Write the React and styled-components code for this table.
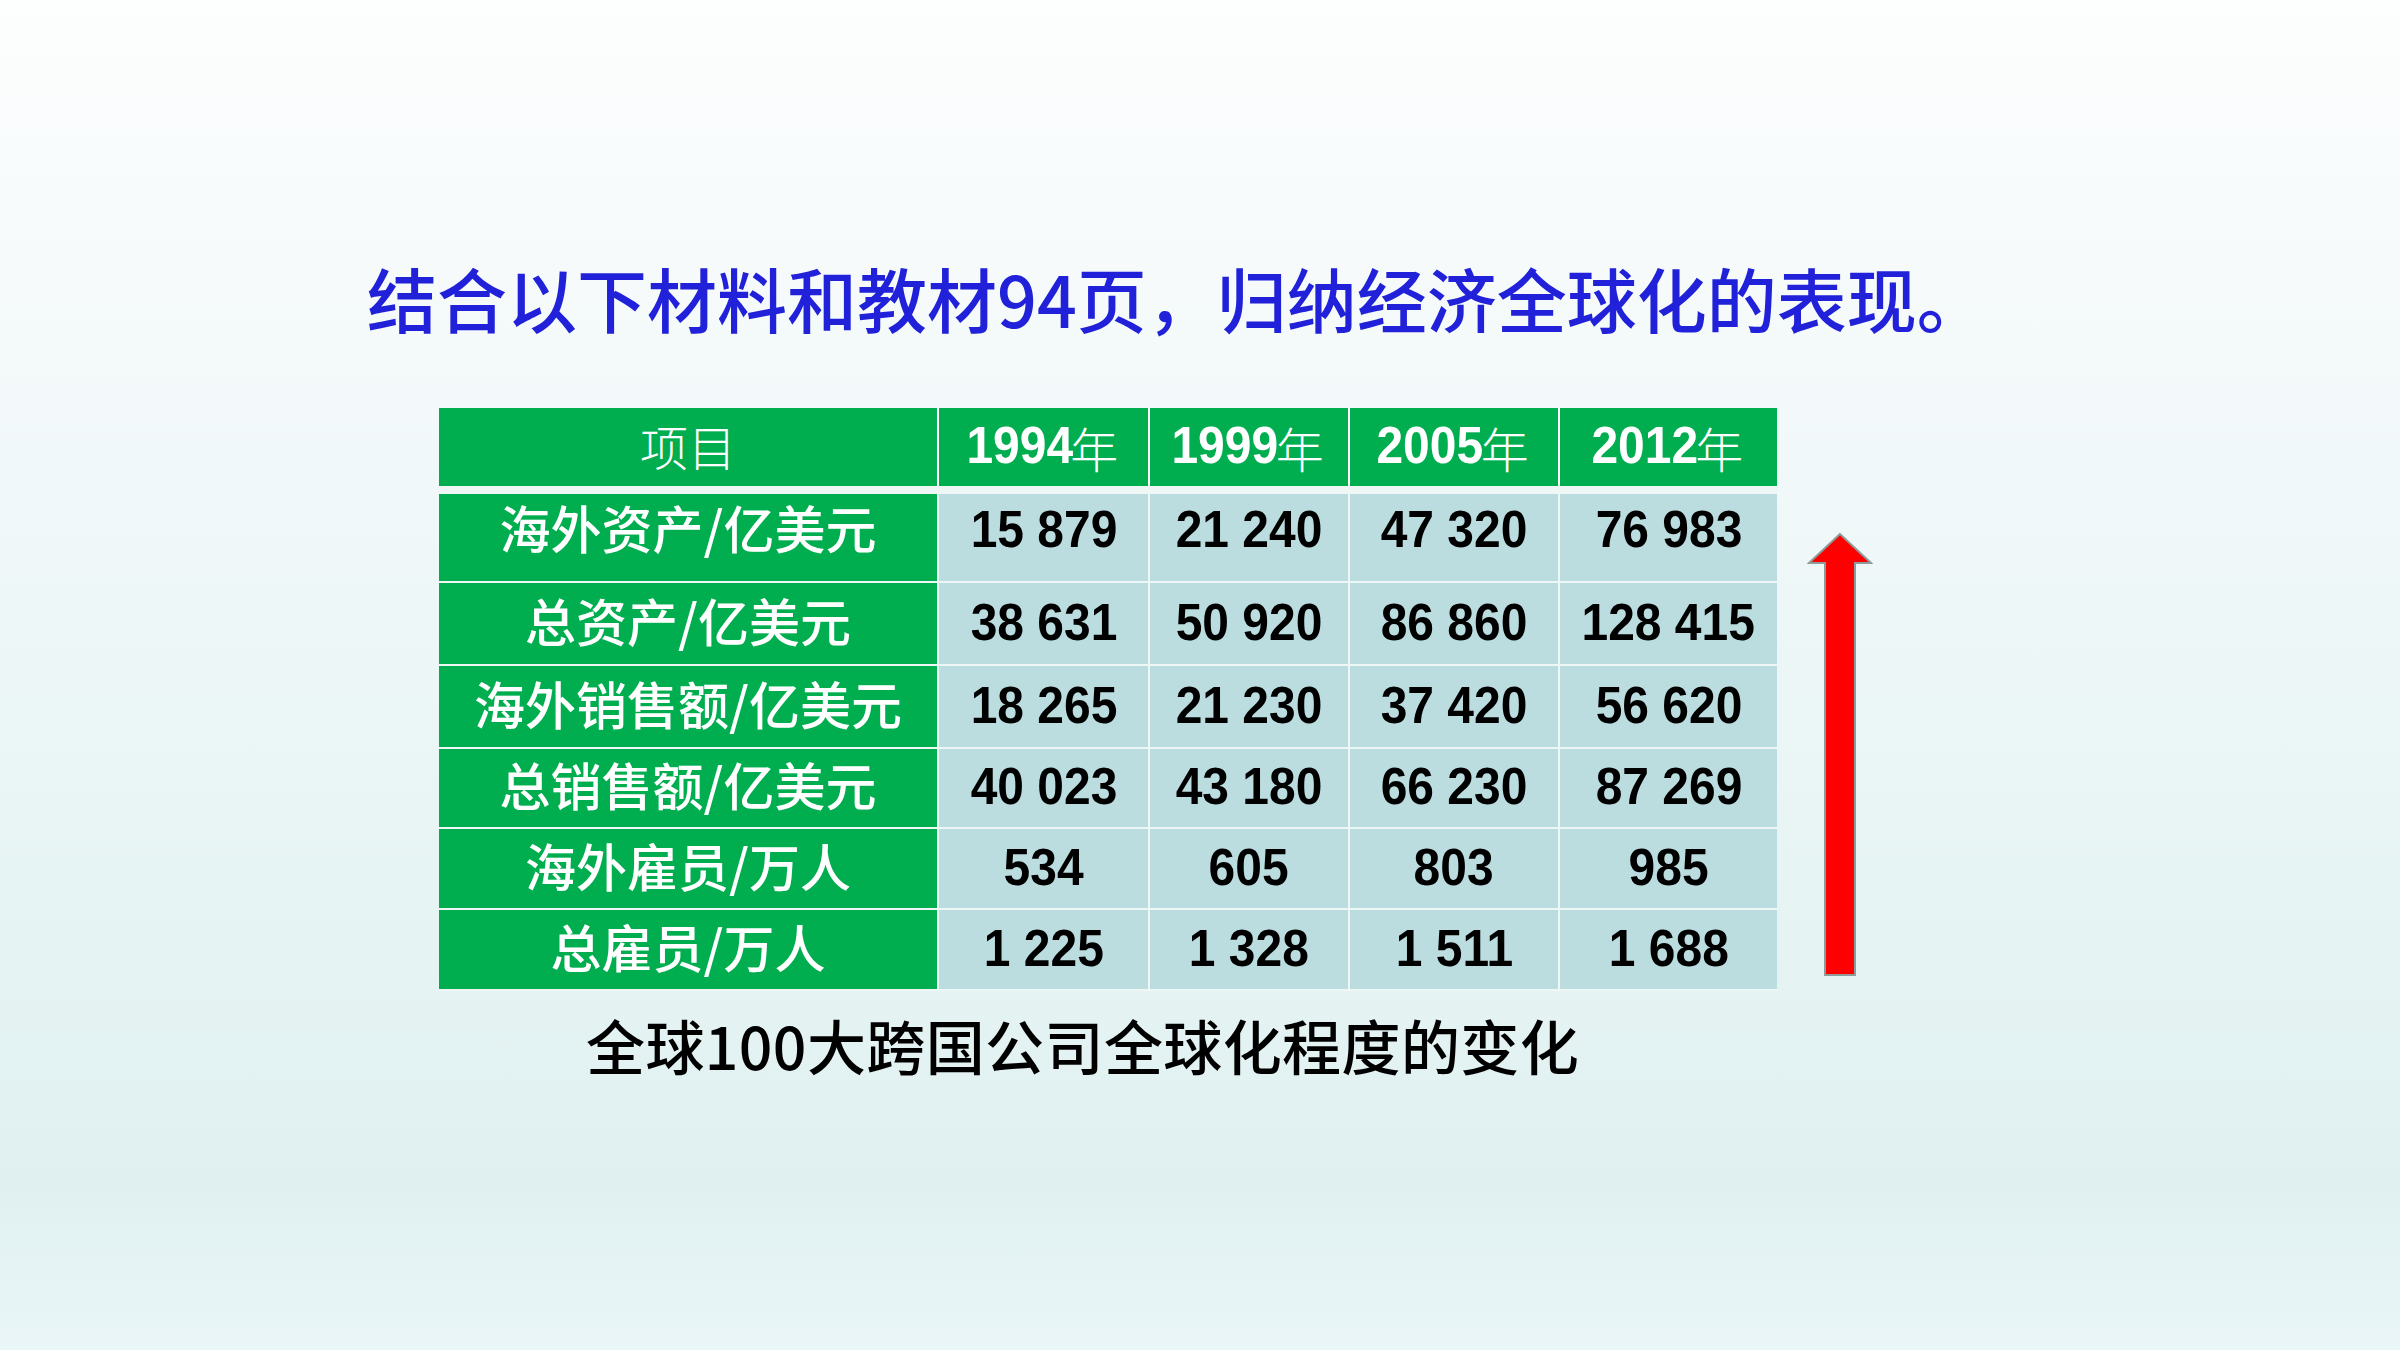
import React from 'react';
import styled, { createGlobalStyle } from 'styled-components';

const GlobalStyle = createGlobalStyle`
	html, body {
		margin: 0;
		padding: 0;
	}
	body {
		font-family: "Liberation Sans", "Noto Sans CJK SC", sans-serif;
	}
`;

const Page = styled.div`
	width: 2400px;
	height: 1350px;
	box-sizing: border-box;
	padding-top: 263px;
	overflow: hidden;
	background: linear-gradient(180deg, #fdfefe 0%, #f6fafb 20%, #e9f5f5 60%, #e0f0f0 88%, #eaf6f7 100%);
`;

const Title = styled.h1`
	margin: 0 0 0 367px;
	font-family: "Noto Sans CJK SC", sans-serif;
	font-size: 70px;
	line-height: 70px;
	font-weight: 500;
	color: #2121d9;
	white-space: nowrap;
`;

const TableRow = styled.div`
	display: flex;
	align-items: flex-start;
	margin: 75px 0 0 439px;
`;

const Table = styled.div`
	display: flex;
	flex-direction: column;
	gap: 2px;
	background: #eef7f6;
	padding-bottom: 2px;
`;

const Row = styled.div`
	display: grid;
	grid-template-columns: 498px 209px 198px 208px 217px;
	column-gap: 2px;
	height: ${p => p.$h}px;
	margin-bottom: ${p => (p.$head ? 6 : 0)}px;
	background: ${p => (p.$head ? '#ffffff' : 'transparent')};
`;

const Cell = styled.div`
	display: flex;
	align-items: center;
	justify-content: center;
	box-sizing: border-box;
	padding-bottom: ${p => p.$lift || 0}px;
	background: ${p => (p.$green ? '#00ae4f' : '#bcdddf')};
	color: ${p => (p.$green ? '#ffffff' : '#000000')};
	white-space: nowrap;
`;

const Label = styled.span`
	display: block;
	padding-bottom: 7px;
	font-family: "Noto Sans CJK SC", sans-serif;
	font-size: 51px;
	font-weight: 500;
	line-height: 1;
`;

const HeadLabel = styled.span`
	display: block;
	padding-bottom: 5px;
	font-family: "Noto Sans CJK SC", sans-serif;
	font-size: 48px;
	font-weight: 300;
	line-height: 1;
`;

// digits in the slide are a touch taller and narrower than plain Arial Bold
const Num = styled.span`
	display: inline-block;
	font-family: "Liberation Sans", sans-serif;
	font-size: 51px;
	font-weight: 700;
	line-height: 1;
	transform: scaleX(0.94);
	margin: 0 -${p => p.$trim || 0}px;
	padding-bottom: 3px;
`;

const Year = styled.span`
	font-family: "Noto Sans CJK SC", sans-serif;
	font-weight: 300;
	font-size: 48px;
`;

const Arrow = styled.svg`
	flex: none;
	margin: 124px 0 0 30px;
`;

const Caption = styled.p`
	margin: 24px 0 0 586px;
	font-family: "Noto Sans CJK SC", sans-serif;
	font-size: 59px;
	line-height: 59px;
	letter-spacing: 0.4px;
	font-weight: 500;
	color: #000;
	white-space: nowrap;
`;

const years = ['1994', '1999', '2005', '2012'];

const rows = [
	{ label: '海外资产/亿美元', values: ['15 879', '21 240', '47 320', '76 983'], h: 87, lift: 14 },
	{ label: '总资产/亿美元', values: ['38 631', '50 920', '86 860', '128 415'], h: 81 },
	{ label: '海外销售额/亿美元', values: ['18 265', '21 230', '37 420', '56 620'], h: 81 },
	{ label: '总销售额/亿美元', values: ['40 023', '43 180', '66 230', '87 269'], h: 78 },
	{ label: '海外雇员/万人', values: ['534', '605', '803', '985'], h: 79 },
	{ label: '总雇员/万人', values: ['1 225', '1 328', '1 511', '1 688'], h: 79 },
];

export default function App() {
	return (
		<Page>
			<GlobalStyle />
			<Title>结合以下材料和教材94页，归纳经济全球化的表现。</Title>

			<TableRow>
				<Table>
					<Row $h={78} $head>
						<Cell $green><HeadLabel>项目</HeadLabel></Cell>
						{years.map(y => (
							<Cell $green key={y}>
								<Num $trim={6}>{y}</Num><Year>年</Year>
							</Cell>
						))}
					</Row>
					{rows.map(r => (
						<Row $h={r.h} key={r.label}>
							<Cell $green $lift={r.lift}><Label>{r.label}</Label></Cell>
							{r.values.map((v, i) => (
								<Cell key={i} $lift={r.lift}><Num>{v}</Num></Cell>
							))}
						</Row>
					))}
				</Table>

				<Arrow width="66" height="446" viewBox="0 0 66 446">
					<polygon
						points="33,2 2,31 18,31 18,443 48,443 48,31 64,31"
						fill="#ff0000"
						stroke="#8d9b9b"
						strokeWidth="2"
						strokeLinejoin="miter"
					/>
				</Arrow>
			</TableRow>

			<Caption>全球100大跨国公司全球化程度的变化</Caption>
		</Page>
	);
}
